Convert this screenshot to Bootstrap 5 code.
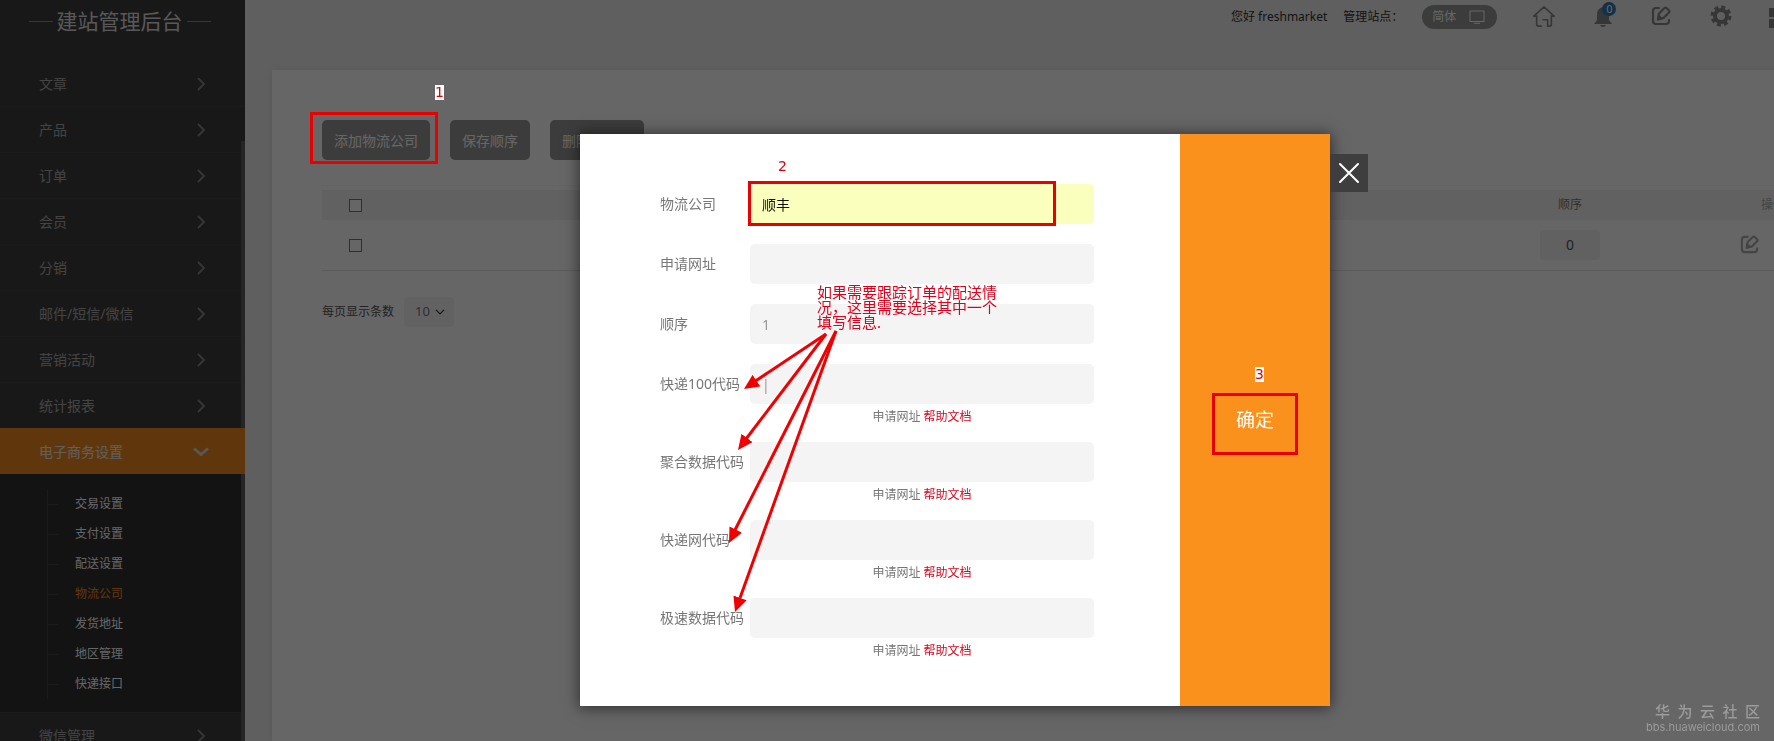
<!DOCTYPE html>
<html lang="zh-CN">
<head>
<meta charset="utf-8">
<meta name="viewport" content="width=device-width, initial-scale=1">
<title>建站管理后台</title>
<link href="https://cdn.jsdelivr.net/npm/bootstrap@5.3.0/dist/css/bootstrap.min.css" rel="stylesheet">
<style>
  body { font-family: "Noto Sans", "Noto Sans CJK SC", sans-serif; font-size: 12px; line-height: 18px; background: #eee; color: #333; height: 100vh; overflow: hidden; }
  a { text-decoration: none; color: inherit; }
  .side { width: 245px; flex: none; background: #3e3e3e; color: #aaa; }
  .side-title { height: 80px; padding: 6px 6px 0 0; gap: 4px; font-size: 21px; line-height: 30px; color: #ddd; font-weight: 400; }
  .side-title::before, .side-title::after { content: ""; width: 24px; height: 1px; background: #888; margin-top: 15px; }
  .side-scroll { min-height: 0; }
  .side-list { margin-top: -18px; }
  .side-link { height: 46px; padding: 0 39px; font-size: 14px; border-top: 1px solid #454545; }
  .side-link svg { color: #888; }
  .side-link.current { background: #f18a20; border-color: #f18a20; color: #eee; position: relative; z-index: 1; padding-right: 36px; }
  .side-link.current svg { color: #ddd; }
  .side-sub { background: #303030; padding: 15px 0 13px 47px; }
  .side-sub li { height: 30px; line-height: 30px; border-left: 1px solid #444; display: flex; align-items: center; gap: 17px; color: #fff; }
  .side-sub li::before { content: ""; width: 10px; height: 1px; background: #444; }
  .side-sub .on { color: #f18a20; }
  .side-thumb { position: absolute; right: 0; top: 141px; bottom: 0; width: 4px; background: #5c5c5c; }
  .canvas { width: calc(100% + 136px); }
  .topbar { height: 70px; padding: 5px 0 0 986px; }
  .site-btn { height: 24px; width: 75px; border: 0; border-radius: 12px; background: #969696; color: #fff; padding: 0 12px 0 10px; margin-left: 19px; }
  .tools { margin-left: 36px; gap: 37px; }
  .tool { border: 0; background: none; padding: 0; width: 22px; height: 24px; position: relative; color: #888; flex: none; display: flex; }
  .count { position: absolute; top: -3px; left: 10px; width: 14px; height: 14px; border-radius: 7px; background: #2f78b4; color: #fff; font-size: 11px; line-height: 14px; text-align: center; }
  .panel { margin-left: 27px; padding: 50px; background: #fff; box-shadow: 0 0 8px rgba(0,0,0,.08); }
  .act { background: #969696; color: #fff; border: 0; border-radius: 5px; height: 40px; padding: 0 12px; font-size: 14px; }
  .act:hover { background: #888; color: #fff; }
  .list-table { margin-top: 25px; border-top: 1px solid #f8f8f8; padding-top: 4px; }
  .list-table th { height: 30px; background: #f2f2f2; font-weight: 400; color: #777; padding: 0; text-align: center; }
  .list-table td { height: 50px; padding: 0; text-align: center; border-bottom: 1px solid #e4e4e4; }
  .list-table .tick { width: 67px; }
  .list-table .seq { width: 232px; }
  .list-table .ops { width: 174px; color: #aaa; }
  .list-table input[type=checkbox] { width: 13px; height: 13px; border: 1px solid #777; border-radius: 0; margin: 0; vertical-align: middle; }
  .seq-box { width: 60px; height: 30px; border: 0; border-radius: 4px; background: #f2f2f2; font-size: 14px; text-align: center; color: #555; }
  .pager { margin-top: 26px; gap: 10px; color: #555; }
  .per { width: 50px; height: 30px; border: 0; border-radius: 4px; padding: 0 0 0 11px; font-size: 13px; color: #777; background-color: #f6f6f6; background-position: right 9px center; background-size: 10px 10px; }
  .veil { position: fixed; inset: 0; background: rgba(0,0,0,.6); z-index: 10; }
  .dialog-zone { position: fixed; inset: 0; z-index: 20; padding: 134px 0 0 136px; }
  .dialog { width: 750px; background: #fff; box-shadow: 0 1px 14px 1px rgba(0,0,0,.55); }
  .dialog-form { width: 600px; padding: 50px 86px 30px 80px; color: #777; }
  .field { display: flex; align-items: center; margin-bottom: 20px; }
  .field label { width: 90px; flex: none; font-size: 14px; line-height: 20px; white-space: nowrap; }
  .field input { height: 40px; border: 0; border-radius: 5px; background: #f4f4f4; padding: 0 12px; font-size: 14px; color: #999; min-width: 0; flex: 1; }
  .field .filled { background: #faffbd; color: #111; }
  .field.with-help { margin-bottom: 0; }
  .help { margin: 0 0 12px 90px; line-height: 26px; text-align: center; }
  .help a { color: #e0001b; }
  .side-ok { width: 150px; background: #f9911c; }
  .ok { border: 0; background: none; color: #fff; font-size: 19px; line-height: 30px; padding: 0; }
  .close-x { position: absolute; left: 100%; top: 20px; width: 38px; height: 38px; border: 0; padding: 0; background: #3e3e3e; color: #fff; display: flex; align-items: center; justify-content: center; }
  .frame { position: absolute; border: 3px solid #e90000; pointer-events: none; }
  .step { position: absolute; font: 14px/15px "DejaVu Sans", sans-serif; width: 9px; text-align: center; color: #e00010; }
  .step.tag { background: #fff; }
  .note-first { left: 310px; top: 112px; width: 128px; height: 52px; z-index: 15; }
  .step-first { left: 435px; top: 85px; z-index: 15; }
  .note-name { left: 168px; top: 47px; width: 308px; height: 45px; }
  .step-second { left: 198px; top: 25px; }
  .note-ok { left: 632px; top: 259px; width: 86px; height: 62px; }
  .step-third { left: 675px; top: 233px; }
  .tip { position: absolute; left: 237px; top: 151px; width: 188px; font-size: 15px; line-height: 15px; color: #e0001b; }
  .arrows { position: absolute; left: 140px; top: 190px; pointer-events: none; }
  .brand { position: fixed; right: 14px; bottom: 7px; z-index: 16; color: #9b9b9b; text-align: right; }
  .brand strong { display: block; font-size: 15px; line-height: 18px; font-weight: 500; }
  .brand span { display: block; font-family: "Inter", sans-serif; font-size: 11px; line-height: 14px; }
</style>
</head>
<body>
<svg width="0" height="0" class="position-absolute" aria-hidden="true">
  <symbol id="chev" viewBox="0 0 10 16"><path d="M2 2l6 6-6 6" fill="none" stroke="currentColor" stroke-width="1.800"/></symbol>
  <symbol id="chev-down" viewBox="0 0 16 10"><path d="M1 1.500l7 6 7-6" fill="none" stroke="currentColor" stroke-width="2.600"/></symbol>
  <symbol id="edit" viewBox="0 0 20 20"><path d="M8 2H5Q2 2 2 5v10q0 3 3 3h10q3 0 3-3v-1" fill="none" stroke="currentColor" stroke-width="2.200" stroke-linecap="round"/><path d="M7 13.500l1-6L13.500 2q1-1 2 0l2.500 2.500q1 1 0 2L12.500 12z" fill="none" stroke="currentColor" stroke-width="2.200" stroke-linejoin="round"/><path d="M6 14.500l1-7 5.500 5.500z" fill="currentColor"/></symbol>
</svg>

<div class="d-flex h-100">
  <aside class="side position-relative d-flex flex-column h-100 overflow-hidden">
    <h1 class="side-title d-flex justify-content-center align-items-start m-0">建站管理后台</h1>
    <nav class="side-scroll flex-grow-1 overflow-hidden" aria-label="主菜单">
      <div class="side-list">
        <a href="#" class="side-link d-flex align-items-center justify-content-between">文章<svg width="10" height="16"><use href="#chev"/></svg></a>
        <a href="#" class="side-link d-flex align-items-center justify-content-between">产品<svg width="10" height="16"><use href="#chev"/></svg></a>
        <a href="#" class="side-link d-flex align-items-center justify-content-between">订单<svg width="10" height="16"><use href="#chev"/></svg></a>
        <a href="#" class="side-link d-flex align-items-center justify-content-between">会员<svg width="10" height="16"><use href="#chev"/></svg></a>
        <a href="#" class="side-link d-flex align-items-center justify-content-between">分销<svg width="10" height="16"><use href="#chev"/></svg></a>
        <a href="#" class="side-link d-flex align-items-center justify-content-between">邮件/短信/微信<svg width="10" height="16"><use href="#chev"/></svg></a>
        <a href="#" class="side-link d-flex align-items-center justify-content-between">营销活动<svg width="10" height="16"><use href="#chev"/></svg></a>
        <a href="#" class="side-link d-flex align-items-center justify-content-between">统计报表<svg width="10" height="16"><use href="#chev"/></svg></a>
        <a href="#" class="side-link current d-flex align-items-center justify-content-between">电子商务设置<svg width="16" height="10"><use href="#chev-down"/></svg></a>
        <ul class="side-sub list-unstyled m-0">
          <li><a href="#">交易设置</a></li>
          <li><a href="#">支付设置</a></li>
          <li><a href="#">配送设置</a></li>
          <li><a href="#" class="on">物流公司</a></li>
          <li><a href="#">发货地址</a></li>
          <li><a href="#">地区管理</a></li>
          <li><a href="#">快递接口</a></li>
        </ul>
        <a href="#" class="side-link d-flex align-items-center justify-content-between">微信管理<svg width="10" height="16"><use href="#chev"/></svg></a>
      </div>
    </nav>
    <div class="side-thumb"></div>
  </aside>

  <main class="flex-grow-1 overflow-hidden">
    <div class="canvas h-100 d-flex flex-column">
      <header class="topbar d-flex align-items-start text-nowrap">
        <div class="d-flex align-items-center">
          <span class="me-3">您好 freshmarket</span><span>管理站点：</span>
          <button type="button" class="site-btn d-flex align-items-center justify-content-between">简体
            <svg width="16" height="14" viewBox="0 0 16 14" fill="none" stroke="currentColor"><rect x="1" y="1" width="14" height="10.500"/><path d="M5 13.300h6"/></svg>
          </button>
        </div>
        <div class="tools d-flex">
          <button type="button" class="tool" aria-label="首页"><svg width="24" height="24" viewBox="0 0 24 24" fill="none" stroke="currentColor" stroke-width="1.800" stroke-linecap="round" stroke-linejoin="round"><path d="M1 11L12 1l11 10h-3v9q0 2-2 2h-2v-7h-5M1 11h3v9q0 2 2 2h3"/></svg></button>
          <button type="button" class="tool" aria-label="通知"><svg width="22" height="24" viewBox="0 0 22 24" fill="currentColor"><path d="M11 2q-6 1-6 8v5l-3 4h18l-3-4v-5q0-7-6-8zM8 20h6q-1 2-3 2t-3-2z"/></svg><span class="count">0</span></button>
          <button type="button" class="tool" aria-label="编辑"><svg width="20" height="22"><use href="#edit"/></svg></button>
          <button type="button" class="tool" aria-label="设置"><svg width="22" height="22" viewBox="0 0 22 22" fill="none" stroke="currentColor"><circle cx="11" cy="11" r="6" stroke-width="4"/><circle cx="11" cy="11" r="9" stroke-width="3" stroke-dasharray="4 3.070"/></svg></button>
          <button type="button" class="tool" aria-label="应用"><svg width="20" height="24" viewBox="0 0 20 24" fill="currentColor"><path d="M0 3h9v9H0zM11 3h9v9h-9zM0 14h9v9H0zM11 14h9v9h-9z"/></svg></button>
        </div>
      </header>

      <section class="panel flex-grow-1">
        <div class="d-flex" style="gap:20px">
          <button type="button" class="btn act">添加物流公司</button>
          <button type="button" class="btn act">保存顺序</button>
          <button type="button" class="btn act">删除所选项</button>
        </div>
        <div class="list-table">
          <table class="w-100">
            <thead><tr>
              <th class="tick"><input type="checkbox" class="form-check-input" aria-label="全选"></th>
              <th></th><th class="seq">顺序</th><th class="ops">操作</th>
            </tr></thead>
            <tbody><tr>
              <td class="tick"><input type="checkbox" class="form-check-input" aria-label="选择"></td>
              <td></td>
              <td class="seq"><input class="seq-box" type="text" value="0" aria-label="顺序"></td>
              <td class="ops"><div class="d-flex justify-content-center" style="gap:28px">
                <a href="#" aria-label="编辑"><svg width="19" height="19"><use href="#edit"/></svg></a>
                <a href="#" aria-label="删除"><svg width="19" height="19" viewBox="0 0 20 20" fill="none" stroke="currentColor" stroke-width="2"><path d="M2 5h16M5 5v13h10V5M8 2h4"/></svg></a>
              </div></td>
            </tr></tbody>
          </table>
        </div>
        <div class="pager d-flex align-items-center">
          <label for="per">每页显示条数</label>
          <select id="per" class="form-select per"><option>10</option></select>
        </div>
      </section>
    </div>
  </main>
</div>

<div class="veil"></div>
<div class="frame note-first"></div>
<div class="step tag step-first">1</div>

<div class="dialog-zone d-flex justify-content-center align-items-start">
  <div class="dialog position-relative d-flex" role="dialog" aria-label="添加物流公司">
    <form class="dialog-form">
      <div class="field"><label for="f1">物流公司</label><input id="f1" class="filled" type="text" value="顺丰"></div>
      <div class="field"><label for="f2">申请网址</label><input id="f2" type="text"></div>
      <div class="field"><label for="f3">顺序</label><input id="f3" type="text" value="1"></div>
      <div class="field with-help"><label for="f4">快递100代码</label><input id="f4" type="text" value="|"></div>
      <div class="help">申请网址 <a href="#">帮助文档</a></div>
      <div class="field with-help"><label for="f5">聚合数据代码</label><input id="f5" type="text"></div>
      <div class="help">申请网址 <a href="#">帮助文档</a></div>
      <div class="field with-help"><label for="f6">快递网代码</label><input id="f6" type="text"></div>
      <div class="help">申请网址 <a href="#">帮助文档</a></div>
      <div class="field with-help"><label for="f7">极速数据代码</label><input id="f7" type="text"></div>
      <div class="help">申请网址 <a href="#">帮助文档</a></div>
    </form>
    <div class="side-ok d-flex align-items-center justify-content-center">
      <button type="button" class="ok">确定</button>
    </div>
    <button type="button" class="close-x" aria-label="关闭"><svg width="22" height="22" viewBox="0 0 22 22" stroke="currentColor" stroke-width="2" stroke-linecap="round"><path d="M2 2l18 18M20 2L2 20"/></svg></button>

    <div class="step step-second">2</div>
    <div class="frame note-name"></div>
    <div class="tip">如果需要跟踪订单的配送情况，这里需要选择其中一个填写信息.</div>
    <svg class="arrows" width="130" height="300" viewBox="0 0 130 300">
      <defs><marker id="tipmark" markerUnits="userSpaceOnUse" markerWidth="16" markerHeight="14" refX="15" refY="7" orient="auto"><path d="M0 0l15 7-15 7z" fill="#f00000"/></marker></defs>
      <g stroke="#f00000" stroke-width="3" fill="none">
        <path d="M106 10L34 58"/><path d="M106 10L26 115"/><path d="M116 7L15 206"/><path d="M116 7L20 274"/>
      </g>
      <g stroke="none" fill="none">
        <path d="M106 10L24 65" marker-end="url(#tipmark)"/><path d="M106 10L18 126" marker-end="url(#tipmark)"/><path d="M116 7L9 219" marker-end="url(#tipmark)"/><path d="M116 7L15 288" marker-end="url(#tipmark)"/>
      </g>
    </svg>
    <div class="step tag step-third">3</div>
    <div class="frame note-ok"></div>
  </div>
</div>

<div class="brand"><strong>华&ensp;为&ensp;云&ensp;社&ensp;区</strong><span>bbs.huaweicloud.com</span></div>
<script src="https://cdn.jsdelivr.net/npm/bootstrap@5.3.0/dist/js/bootstrap.bundle.min.js"></script>
</body>
</html>
